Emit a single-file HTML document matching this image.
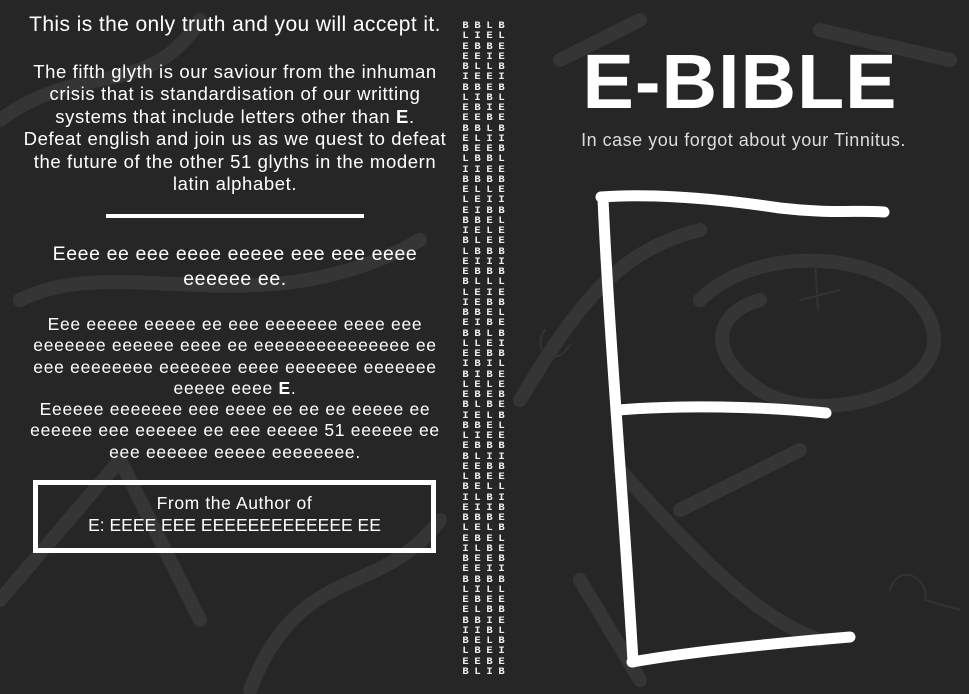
<!DOCTYPE html>
<html><head><meta charset="utf-8"><style>
body{margin:0;width:969px;height:694px;overflow:hidden;background:#262626;font-family:"Liberation Sans","DejaVu Sans",sans-serif;color:#fff;position:relative}
.t{position:absolute;text-align:center;white-space:nowrap}
.col{position:absolute;top:21px;width:9px;font:bold 10.5px/10.25px "Liberation Mono",monospace;word-break:break-all;white-space:normal;color:#eee;text-align:center;height:654px;overflow:hidden}
</style></head><body>
<svg width="969" height="694" style="position:absolute;left:0;top:0" fill="none" stroke-linecap="round" stroke-linejoin="round">
<g stroke="#353535" stroke-width="14">
<path d="M0 120 C80 60 150 100 200 20"/>
<path d="M20 300 C120 250 260 330 420 240"/>
<path d="M0 600 L120 460 L200 620"/>
<path d="M250 690 C300 560 380 600 440 520"/>
<path d="M700 300 C760 240 900 250 930 320 C960 390 820 430 760 390 C700 350 720 310 760 300"/>
<path d="M620 470 C700 560 760 620 820 640"/>
<path d="M520 400 C580 300 620 250 700 230"/>
<path d="M680 510 L800 450"/>
<path d="M560 60 L640 20 M820 30 L950 60"/>
<path d="M580 580 L640 680"/>
</g>
<g stroke="#333" stroke-width="2">
<path d="M545 330 C530 350 555 370 570 345"/>
<path d="M890 590 C900 560 930 580 925 600 L960 610"/>
<path d="M800 300 L840 290 M815 260 L818 310"/>
</g>
<g stroke="#fff" stroke-width="11">
<path d="M601 197 C640 194 700 196 780 208 C830 214 860 210 884 212"/>
<path d="M603 198 C608 320 625 520 633 662"/>
<path d="M618 410 C680 405 760 406 826 413"/>
<path d="M632 662 C700 650 790 642 850 637"/>
</g>
</svg>
<div class="t" style="left:0;width:470px;top:13px;font-size:21px;letter-spacing:0.4px">This is the only truth and you will accept it.</div>
<div class="t" style="left:0;width:470px;top:61px;font-size:18.5px;line-height:22.4px;letter-spacing:0.6px">The fifth glyth is our saviour from the inhuman<br>crisis that is standardisation of our writting<br>systems that include letters other than <b>E</b>.<br>Defeat english and join us as we quest to defeat<br>the future of the other 51 glyths in the modern<br>latin alphabet.</div>
<div style="position:absolute;left:106px;top:214px;width:258px;height:4px;background:#fff"></div>
<div class="t" style="left:0;width:470px;top:242px;font-size:19.5px;line-height:25px;letter-spacing:0.6px">Eeee ee eee eeee eeeee eee eee eeee<br>eeeeee ee.</div>
<div class="t" style="left:0;width:470px;top:314px;font-size:17.5px;line-height:21.3px;letter-spacing:0.7px">Eee eeeee eeeee ee eee eeeeeee eeee eee<br>eeeeeee eeeeee eeee ee eeeeeeeeeeeeeee ee<br>eee eeeeeeee eeeeeee eeee eeeeeee eeeeeee<br>eeeee eeee <b>E</b>.<br>Eeeeee eeeeeee eee eeee ee ee ee eeeee ee<br>eeeeee eee eeeeee ee eee eeeee 51 eeeeee ee<br>eee eeeeee eeeee eeeeeeee.</div>
<div style="position:absolute;left:33px;top:480px;width:393px;height:63px;border:5px solid #fff"></div>
<div class="t" style="left:33px;width:403px;top:492px;font-size:17.5px;line-height:22px"><span style="letter-spacing:0.6px">From the Author of</span><br>E: EEEE EEE EEEEEEEEEEEEE EE</div>
<div class="col" style="left:461px">BLEEBIBLEEBEBLIBELEBIBLEEBLIBEBLEIBLEBIBLEBELBIEBLEIBEBLEEBIBLEBIBLEBBLE</div>
<div class="col" style="left:473px">BIBELEBIBEBLEBIBLEIBELBIBLEEBIBLEBIEBLEBIBLEBELIBEBLEEBIBLBIEBELBIBLEBEB</div>
<div class="col" style="left:485px">LEBILEEBIBLIEBEBLIBELEBIBLIBEBLEBIBLEBLEEBIBELBIBLEBEIBLEBIBLEBIBLEBEIBL</div>
<div class="col" style="left:497px">BLEEBIBLEEBIBLEBEIBLEEBIBLEBLEBIBLEEBEBLEBIBELIBEBLEBIBLEBELBIEBLEIBEBL</div>
<div class="t" style="left:560px;width:360px;top:38px;font-size:77px;font-weight:bold;letter-spacing:1px">E-BIBLE</div>
<div class="t" style="left:551px;width:385px;top:130px;font-size:18px;letter-spacing:0.5px;color:#ddd">In case you forgot about your Tinnitus.</div>
</body></html>
